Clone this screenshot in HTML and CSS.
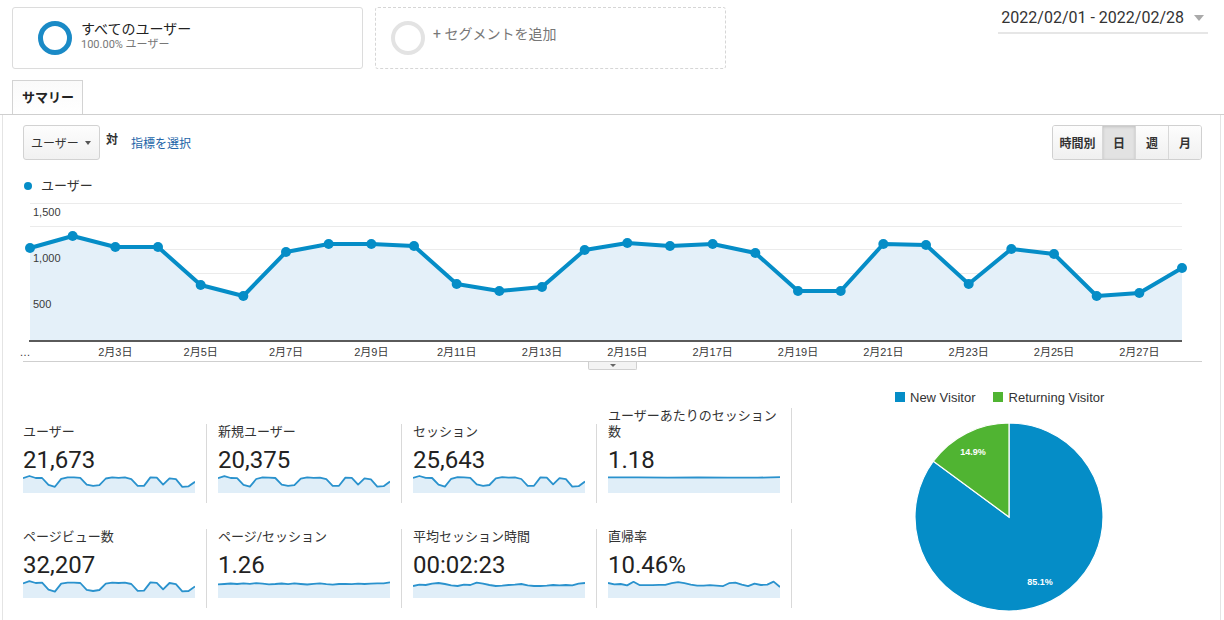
FILE: index.html
```html
<!DOCTYPE html>
<html lang="ja">
<head>
<meta charset="utf-8">
<title>Analytics</title>
<link rel="stylesheet" href="styles.css">
</head>
<body>
<div class="top">
  <div class="seg seg-active">
    <svg class="ring" width="34" height="34" viewBox="0 0 34 34"><circle cx="17" cy="17" r="14.5" fill="none" stroke="#1a8ac6" stroke-width="5"/></svg>
    <div class="seg-text">
      <div class="seg-title">すべてのユーザー</div>
      <div class="seg-sub">100.00% ユーザー</div>
    </div>
  </div>
  <div class="seg seg-add">
    <svg class="ring ring-add" width="34" height="34" viewBox="0 0 34 34"><circle cx="17" cy="17" r="15" fill="none" stroke="#e3e3e3" stroke-width="4"/></svg>
    <div class="seg-add-text">+ セグメントを追加</div>
  </div>
  <div class="date"><span>2022/02/01 - 2022/02/28</span><span class="caret"></span></div>
</div>

<div class="tabs"><div class="tab">サマリー</div></div>

<div class="panel">
  <div class="controls">
    <div class="left-controls">
      <div class="select"><span>ユーザー</span><span class="caret-sm"></span></div>
      <span class="vs">対</span>
      <a class="pick">指標を選択</a>
    </div>
    <div class="btn-group">
      <span class="btn btn-wide">時間別</span><span class="btn active">日</span><span class="btn">週</span><span class="btn">月</span>
    </div>
  </div>

  <div class="legend"><span class="dot"></span><span>ユーザー</span></div>

  <svg class="chart" width="1210" height="167" viewBox="3 195 1210 167">
    <g stroke="#ebebeb" stroke-width="1">
      <line x1="30" y1="203.5" x2="1182" y2="203.5"/>
      <line x1="30" y1="226.5" x2="1182" y2="226.5"/>
      <line x1="30" y1="249.5" x2="1182" y2="249.5"/>
      <line x1="30" y1="273.5" x2="1182" y2="273.5"/>
      <line x1="30" y1="296.5" x2="1182" y2="296.5"/>
      <line x1="30" y1="319.5" x2="1182" y2="319.5"/>
    </g>
    <polygon fill="#e4f0f9" points="30,341 30,248 72.67,236 115.33,247 158,247 200.67,285 243.33,296 286,252 328.67,244 371.33,244 414,246 456.67,284 499.33,291 542,287 584.67,250 627.33,243 670,246 712.67,244 755.33,253 798,291 840.67,291 883.33,244 926,245 968.67,284 1011.33,249 1054,254 1096.67,296 1139.33,293 1182,268 1182,341"/>
    <g class="ylab">
      <text x="33" y="216">1,500</text>
      <text x="33" y="262">1,000</text>
      <text x="33" y="308">500</text>
    </g>
    <line x1="29" y1="341" x2="1182" y2="341" stroke="#5a5a5a" stroke-width="2"/>
    <polyline fill="none" stroke="#058dc7" stroke-width="4" stroke-linejoin="round" points="30,248 72.67,236 115.33,247 158,247 200.67,285 243.33,296 286,252 328.67,244 371.33,244 414,246 456.67,284 499.33,291 542,287 584.67,250 627.33,243 670,246 712.67,244 755.33,253 798,291 840.67,291 883.33,244 926,245 968.67,284 1011.33,249 1054,254 1096.67,296 1139.33,293 1182,268"/>
    <g fill="#058dc7">
      <circle cx="30" cy="248" r="5"/><circle cx="72.67" cy="236" r="5"/><circle cx="115.33" cy="247" r="5"/><circle cx="158" cy="247" r="5"/><circle cx="200.67" cy="285" r="5"/><circle cx="243.33" cy="296" r="5"/><circle cx="286" cy="252" r="5"/><circle cx="328.67" cy="244" r="5"/><circle cx="371.33" cy="244" r="5"/><circle cx="414" cy="246" r="5"/><circle cx="456.67" cy="284" r="5"/><circle cx="499.33" cy="291" r="5"/><circle cx="542" cy="287" r="5"/><circle cx="584.67" cy="250" r="5"/><circle cx="627.33" cy="243" r="5"/><circle cx="670" cy="246" r="5"/><circle cx="712.67" cy="244" r="5"/><circle cx="755.33" cy="253" r="5"/><circle cx="798" cy="291" r="5"/><circle cx="840.67" cy="291" r="5"/><circle cx="883.33" cy="244" r="5"/><circle cx="926" cy="245" r="5"/><circle cx="968.67" cy="284" r="5"/><circle cx="1011.33" cy="249" r="5"/><circle cx="1054" cy="254" r="5"/><circle cx="1096.67" cy="296" r="5"/><circle cx="1139.33" cy="293" r="5"/><circle cx="1182" cy="268" r="5"/>
    </g>
    <g class="xlab">
      <text x="25" y="356" text-anchor="start">…</text>
      <text x="115.33" y="356">2月3日</text>
      <text x="200.67" y="356">2月5日</text>
      <text x="286" y="356">2月7日</text>
      <text x="371.33" y="356">2月9日</text>
      <text x="456.67" y="356">2月11日</text>
      <text x="542" y="356">2月13日</text>
      <text x="627.33" y="356">2月15日</text>
      <text x="712.67" y="356">2月17日</text>
      <text x="798" y="356">2月19日</text>
      <text x="883.33" y="356">2月21日</text>
      <text x="968.67" y="356">2月23日</text>
      <text x="1054" y="356">2月25日</text>
      <text x="1139.33" y="356">2月27日</text>
    </g>
    <line x1="23" y1="361.5" x2="1202" y2="361.5" stroke="#cfcfcf" stroke-width="1"/>
  </svg>
  <div class="toggle"><span class="toggle-caret"></span></div>

  <div class="bottom">
    <div class="metrics">
      <div class="cell">
        <div class="m-label">ユーザー</div>
        <div class="m-value">21,673</div>
        <svg class="spark" viewBox="0 0 172 18" preserveAspectRatio="none"><path class="sf" d="M0,18 L0,3.2 6.4,1 12.7,3 19.1,3 25.5,9.8 31.9,11.8 38.2,3.9 44.6,2.4 51,2.4 57.3,2.8 63.7,9.6 70.1,10.9 76.4,10.2 82.8,3.5 89.2,2.3 95.6,2.8 101.9,2.4 108.3,4.1 114.7,10.9 121,10.9 127.4,2.4 133.8,2.6 140.1,9.6 146.5,3.3 152.9,4.2 159.3,11.8 165.6,11.3 172,6.8 L172,18 Z"/><polyline class="sl" points="0,3.2 6.4,1 12.7,3 19.1,3 25.5,9.8 31.9,11.8 38.2,3.9 44.6,2.4 51,2.4 57.3,2.8 63.7,9.6 70.1,10.9 76.4,10.2 82.8,3.5 89.2,2.3 95.6,2.8 101.9,2.4 108.3,4.1 114.7,10.9 121,10.9 127.4,2.4 133.8,2.6 140.1,9.6 146.5,3.3 152.9,4.2 159.3,11.8 165.6,11.3 172,6.8"/></svg>
      </div>
      <div class="cell">
        <div class="m-label">新規ユーザー</div>
        <div class="m-value">20,375</div>
        <svg class="spark" viewBox="0 0 172 18" preserveAspectRatio="none"><path class="sf" d="M0,18 L0,3.2 6.4,1.2 12.7,3 19.1,3.2 25.5,9.8 31.9,11.6 38.2,4 44.6,2.4 51,2.6 57.3,3 63.7,9.6 70.1,10.8 76.4,10.2 82.8,3.6 89.2,2.3 95.6,2.8 101.9,2.6 108.3,4.2 114.7,10.8 121,10.8 127.4,2.6 133.8,2.8 140.1,9.6 146.5,3.4 152.9,4.4 159.3,11.6 165.6,11.2 172,6.6 L172,18 Z"/><polyline class="sl" points="0,3.2 6.4,1.2 12.7,3 19.1,3.2 25.5,9.8 31.9,11.6 38.2,4 44.6,2.4 51,2.6 57.3,3 63.7,9.6 70.1,10.8 76.4,10.2 82.8,3.6 89.2,2.3 95.6,2.8 101.9,2.6 108.3,4.2 114.7,10.8 121,10.8 127.4,2.6 133.8,2.8 140.1,9.6 146.5,3.4 152.9,4.4 159.3,11.6 165.6,11.2 172,6.6"/></svg>
      </div>
      <div class="cell">
        <div class="m-label">セッション</div>
        <div class="m-value">25,643</div>
        <svg class="spark" viewBox="0 0 172 18" preserveAspectRatio="none"><path class="sf" d="M0,18 L0,3 6.4,1 12.7,2.8 19.1,3 25.5,9.6 31.9,11.6 38.2,3.8 44.6,2.2 51,2.4 57.3,2.8 63.7,9.4 70.1,10.8 76.4,10 82.8,3.4 89.2,2.2 95.6,2.6 101.9,2.4 108.3,4 114.7,10.8 121,10.8 127.4,2.4 133.8,2.6 140.1,9.4 146.5,3.2 152.9,4.2 159.3,11.6 165.6,11.2 172,6.6 L172,18 Z"/><polyline class="sl" points="0,3 6.4,1 12.7,2.8 19.1,3 25.5,9.6 31.9,11.6 38.2,3.8 44.6,2.2 51,2.4 57.3,2.8 63.7,9.4 70.1,10.8 76.4,10 82.8,3.4 89.2,2.2 95.6,2.6 101.9,2.4 108.3,4 114.7,10.8 121,10.8 127.4,2.4 133.8,2.6 140.1,9.4 146.5,3.2 152.9,4.2 159.3,11.6 165.6,11.2 172,6.6"/></svg>
      </div>
      <div class="cell">
        <div class="m-label">ユーザーあたりのセッション数</div>
        <div class="m-value">1.18</div>
        <svg class="spark" viewBox="0 0 172 18" preserveAspectRatio="none"><path class="sf" d="M0,18 L0,2.4 30,2.3 60,2.6 90,2.5 120,2.7 150,2.6 172,2.2 L172,18 Z"/><polyline class="sl" points="0,2.4 30,2.3 60,2.6 90,2.5 120,2.7 150,2.6 172,2.2"/></svg>
      </div>
      <div class="cell">
        <div class="m-label">ページビュー数</div>
        <div class="m-value">32,207</div>
        <svg class="spark" viewBox="0 0 172 18" preserveAspectRatio="none"><path class="sf" d="M0,18 L0,3.4 6.4,1.2 12.7,3 19.1,2.6 25.5,9.6 31.9,11.6 38.2,3.6 44.6,2.6 51,2.6 57.3,3 63.7,9.8 70.1,11 76.4,10 82.8,3.6 89.2,2.6 95.6,3 101.9,2.6 108.3,4 114.7,10.8 121,10.6 127.4,2.4 133.8,2.8 140.1,9.4 146.5,3 152.9,4.2 159.3,11.4 165.6,11 172,6.4 L172,18 Z"/><polyline class="sl" points="0,3.4 6.4,1.2 12.7,3 19.1,2.6 25.5,9.6 31.9,11.6 38.2,3.6 44.6,2.6 51,2.6 57.3,3 63.7,9.8 70.1,11 76.4,10 82.8,3.6 89.2,2.6 95.6,3 101.9,2.6 108.3,4 114.7,10.8 121,10.6 127.4,2.4 133.8,2.8 140.1,9.4 146.5,3 152.9,4.2 159.3,11.4 165.6,11 172,6.4"/></svg>
      </div>
      <div class="cell">
        <div class="m-label">ページ/セッション</div>
        <div class="m-value">1.26</div>
        <svg class="spark" viewBox="0 0 172 18" preserveAspectRatio="none"><path class="sf" d="M0,18 L0,4.4 6.4,4 12.7,3.5 19.1,4 25.5,3.3 31.9,3.8 38.2,3.1 44.6,3.6 51,4.3 57.3,4 63.7,3.5 70.1,4.2 76.4,3.4 82.8,4 89.2,4.5 95.6,3.8 101.9,3.4 108.3,4.2 114.7,4.6 121,4 127.4,3.8 133.8,4.2 140.1,3.6 146.5,4 152.9,3.7 159.3,3.3 165.6,3.4 172,2.4 L172,18 Z"/><polyline class="sl" points="0,4.4 6.4,4 12.7,3.5 19.1,4 25.5,3.3 31.9,3.8 38.2,3.1 44.6,3.6 51,4.3 57.3,4 63.7,3.5 70.1,4.2 76.4,3.4 82.8,4 89.2,4.5 95.6,3.8 101.9,3.4 108.3,4.2 114.7,4.6 121,4 127.4,3.8 133.8,4.2 140.1,3.6 146.5,4 152.9,3.7 159.3,3.3 165.6,3.4 172,2.4"/></svg>
      </div>
      <div class="cell">
        <div class="m-label">平均セッション時間</div>
        <div class="m-value">00:02:23</div>
        <svg class="spark" viewBox="0 0 172 18" preserveAspectRatio="none"><path class="sf" d="M0,18 L0,6 6.4,4.6 12.7,5 19.1,3.6 25.5,3 31.9,4 38.2,5.4 44.6,6 51,4.6 57.3,5 63.7,2.6 70.1,3.6 76.4,5 82.8,6 89.2,5.6 95.6,5 101.9,4.6 108.3,4 114.7,5.4 121,6 127.4,6 133.8,5.6 140.1,5 146.5,5.4 152.9,5 159.3,5.4 165.6,3.6 172,3 L172,18 Z"/><polyline class="sl" points="0,6 6.4,4.6 12.7,5 19.1,3.6 25.5,3 31.9,4 38.2,5.4 44.6,6 51,4.6 57.3,5 63.7,2.6 70.1,3.6 76.4,5 82.8,6 89.2,5.6 95.6,5 101.9,4.6 108.3,4 114.7,5.4 121,6 127.4,6 133.8,5.6 140.1,5 146.5,5.4 152.9,5 159.3,5.4 165.6,3.6 172,3"/></svg>
      </div>
      <div class="cell">
        <div class="m-label">直帰率</div>
        <div class="m-value">10.46%</div>
        <svg class="spark" viewBox="0 0 172 18" preserveAspectRatio="none"><path class="sf" d="M0,18 L0,3 6.4,4.4 12.7,4 19.1,5.4 25.5,1.8 31.9,5.2 38.2,5.2 44.6,5.2 51,4.8 57.3,4.8 63.7,3.2 70.1,2.2 76.4,3.2 82.8,4.6 89.2,5.6 95.6,5.6 101.9,5.2 108.3,5.6 114.7,6.2 121,3.2 127.4,2.6 133.8,4.6 140.1,6.2 146.5,3.6 152.9,5 159.3,4.6 165.6,1.6 172,7 L172,18 Z"/><polyline class="sl" points="0,3 6.4,4.4 12.7,4 19.1,5.4 25.5,1.8 31.9,5.2 38.2,5.2 44.6,5.2 51,4.8 57.3,4.8 63.7,3.2 70.1,2.2 76.4,3.2 82.8,4.6 89.2,5.6 95.6,5.6 101.9,5.2 108.3,5.6 114.7,6.2 121,3.2 127.4,2.6 133.8,4.6 140.1,6.2 146.5,3.6 152.9,5 159.3,4.6 165.6,1.6 172,7"/></svg>
      </div>
    </div>

    <div class="pie-col">
      <div class="pie-legend">
        <span class="sq sq-blue"></span><span class="pl-text pl-first">New Visitor</span>
        <span class="sq sq-green"></span><span class="pl-text">Returning Visitor</span>
      </div>
      <svg class="pie" width="190" height="190" viewBox="0 0 190 190">
        <path d="M95,95 L19.33,39.24 A94,94 0 1,0 95,1 Z" fill="#058dc7" stroke="#fff" stroke-width="1.2"/>
        <path d="M95,95 L95,1 A94,94 0 0,0 19.33,39.24 Z" fill="#50b432" stroke="#fff" stroke-width="1.2"/>
        <text class="pie-lab" x="59" y="33" text-anchor="middle">14.9%</text>
        <text class="pie-lab" x="126" y="163" text-anchor="middle">85.1%</text>
      </svg>
    </div>
  </div>
</div>
</body>
</html>
```

FILE: styles.css
```css
* { box-sizing: border-box; }
html, body { margin: 0; padding: 0; background: #fff; }
body {
  width: 1224px;
  height: 620px;
  overflow: hidden;
  font-family: Roboto, "Noto Sans CJK JP", sans-serif;
  color: #333;
}

/* top row */
.top { display: flex; align-items: flex-start; height: 69px; }
.seg {
  width: 351px;
  height: 62px;
  margin-top: 7px;
  border-radius: 3px;
  display: flex;
  align-items: flex-start;
  padding-top: 13px;
}
.seg-active { margin-left: 12px; border: 1px solid #dcdcdc; }
.seg-add { margin-left: 12px; border: 1px dashed #d6d6d6; }
.ring { display: block; flex: none; }
.seg-active .ring { margin-left: 25px; }
.seg-add .ring { margin-left: 15px; }
.seg-text { margin-left: 9px; }
.seg-title { font-size: 14px; line-height: 17px; color: #222; }
.seg-sub { font-size: 11px; line-height: 14px; color: #777; }
.seg-add-text { margin-left: 8px; margin-top: 3px; font-size: 14px; line-height: 20px; color: #777; }

.date {
  margin-left: auto;
  margin-right: 16px;
  display: flex;
  align-items: center;
  padding: 8px 4px 4px 3px;
  border-bottom: 2px solid #e6e6e6;
  font-size: 16px;
  line-height: 20px;
  color: #333;
}
.caret {
  margin-left: 10px;
  width: 0; height: 0;
  border-left: 5.5px solid transparent;
  border-right: 5.5px solid transparent;
  border-top: 6px solid #aaa;
}

/* tabs */
.tabs { margin-top: 11px; border-bottom: 1px solid #cfcfcf; height: 35px; }
.tab {
  margin-left: 12px;
  width: 71px;
  height: 34px;
  border: 1px solid #d3d3d3;
  border-bottom: none;
  background: linear-gradient(#fafafa, #fff);
  padding-left: 9px;
  font-size: 13px;
  font-weight: bold;
  line-height: 33px;
  color: #222;
}

/* panel */
.panel {
  margin: 0 3px 0 2px;
  height: 505px;
  border-left: 1px solid #e4e4e4;
  border-right: 1px solid #e4e4e4;
}
.controls {
  display: flex;
  justify-content: space-between;
  align-items: flex-start;
  padding: 10px 18px 0 20px;
  height: 45px;
}
.left-controls { display: flex; align-items: center; height: 35px; }
.select {
  width: 77px;
  height: 35px;
  border: 1px solid #d2d2d2;
  border-radius: 3px;
  background: linear-gradient(#fdfdfd, #f1f1f1);
  display: flex;
  align-items: center;
  padding-left: 7px;
  font-size: 12px;
  color: #333;
}
.caret-sm {
  margin-left: auto;
  margin-right: 8px;
  width: 0; height: 0;
  border-left: 3.5px solid transparent;
  border-right: 3.5px solid transparent;
  border-top: 4px solid #555;
}
.vs {
  align-self: flex-start;
  margin-top: 8px;
  margin-left: 6px;
  font-size: 12px;
  font-weight: bold;
  line-height: 14px;
  color: #333;
}
.pick { margin-left: 13px; font-size: 12px; color: #2264a8; text-decoration: none; }

.btn-group {
  display: flex;
  border: 1px solid #d0d0d0;
  border-radius: 3px;
  height: 35px;
  overflow: hidden;
}
.btn {
  width: 33px;
  height: 33px;
  border-left: 1px solid #d8d8d8;
  background: linear-gradient(#fdfdfd, #f0f0f0);
  display: flex;
  align-items: center;
  justify-content: center;
  font-size: 12px;
  font-weight: bold;
  color: #333;
}
.btn-wide { width: 49px; border-left: none; }
.btn.active { background: #e2e2e2; box-shadow: inset 0 1px 3px rgba(0,0,0,0.15); }

.legend {
  height: 35px;
  padding: 17px 0 0 21px;
  display: flex;
  align-items: center;
  font-size: 13px;
  line-height: 18px;
  color: #333;
}
.dot { width: 8px; height: 8px; border-radius: 50%; background: #058dc7; margin-right: 9px; }

.chart { display: block; }
.chart text { font-family: "Liberation Sans", "Noto Sans CJK JP", sans-serif; font-size: 11px; fill: #3a3a3a; }
.xlab text { text-anchor: middle; }

.toggle {
  margin-left: 585px;
  width: 49px;
  height: 8px;
  border: 1px solid #d0d0d0;
  border-top: none;
  border-radius: 0 0 2px 2px;
  background: #f3f3f3;
  display: flex;
  justify-content: center;
  padding-top: 2px;
}
.toggle-caret {
  width: 0; height: 0;
  border-left: 3.5px solid transparent;
  border-right: 3.5px solid transparent;
  border-top: 3px solid #666;
}

/* bottom */
.bottom { display: flex; align-items: flex-start; margin-top: 20px; }
.metrics {
  margin-left: 9px;
  padding-top: 18px;
  display: grid;
  grid-template-columns: repeat(4, 195px);
  row-gap: 26px;
  align-items: end;
}
.cell {
  padding: 0 11px 10px 11px;
  border-right: 1px solid #d9d9d9;
}
.m-label { font-size: 13px; line-height: 16px; color: #333; }
.m-value { margin-top: 6px; font-size: 24px; line-height: 28px; color: #222; }
.spark { display: block; margin-top: 1px; width: 172px; height: 18px; }
.sf { fill: #e0eef8; }
.sl { fill: none; stroke: #2a92cd; stroke-width: 1.8; vector-effect: non-scaling-stroke; stroke-linejoin: round; }

.pie-col { flex: 1; }
.pie-legend {
  margin-left: 103px;
  display: flex;
  align-items: center;
  height: 14px;
  font-family: "Liberation Sans", Arial, sans-serif;
  font-size: 13px;
  color: #333;
}
.sq { width: 10px; height: 10px; margin-right: 5px; }
.sq-blue { background: #058dc7; }
.sq-green { background: #50b432; margin-right: 6px; }
.pl-first { margin-right: 17px; }
.pie { display: block; margin-left: 122px; margin-top: 18px; }
.pie-lab { font-family: "Liberation Sans", Arial, sans-serif; font-size: 9px; font-weight: bold; fill: #fff; }
```
